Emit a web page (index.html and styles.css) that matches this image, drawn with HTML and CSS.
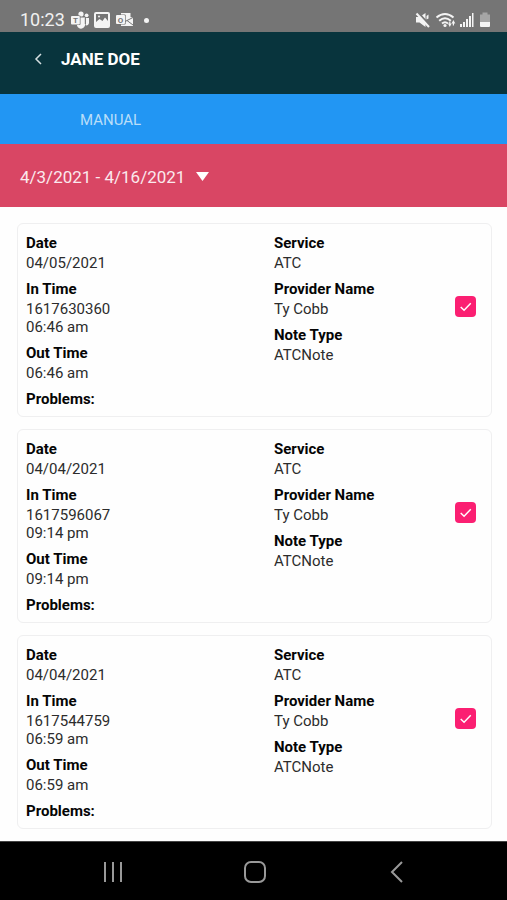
FILE: index.html
```html
<!DOCTYPE html>
<html lang="en">
<head>
<meta charset="utf-8">
<meta name="viewport" content="width=device-width, initial-scale=1">
<title>Jane Doe</title>
<link rel="stylesheet" href="styles.css">
</head>
<body>
<div class="status">
  <span class="clock">10:23</span>
  <svg class="teams" width="19" height="18" viewBox="0 0 19 18" aria-hidden="true">
    <circle cx="10" cy="3" r="2.600"/><circle cx="15.600" cy="4.300" r="1.900"/>
    <path d="M6 6.500h8v6a4 4 0 0 1-8 2zM14.700 7H18v5a2.600 2.600 0 0 1-3.300 2.300z"/>
    <path class="gap" d="M14.300 7v6"/>
    <rect class="cut" x="0" y="4.500" width="9.500" height="9.500" rx="1"/>
    <rect x="0" y="5" width="8.800" height="8.500" rx="1"/>
    <text x="4.500" y="12" text-anchor="middle">T</text>
  </svg>
  <svg class="photo" width="16" height="16" viewBox="0 0 16 16" aria-hidden="true">
    <rect x="1" y="1" width="14" height="14" rx="1" fill="none" stroke="#f4f4f4" stroke-width="2"/>
    <path d="M2 10l3.500-3 3 2 2.500-3.500 3 3.500v5H2z"/><circle cx="5" cy="4.500" r="1"/>
  </svg>
  <svg class="mail" width="18" height="16" viewBox="0 0 18 16" aria-hidden="true">
    <path d="M5 1h9.500v4L17 5.500V14H5z"/>
    <path class="gap" d="M9 9.500l8-4M11 8.500l6 4.500"/>
    <rect class="cut" x="0" y="2.500" width="9.700" height="10" rx="1"/>
    <rect x="0" y="3" width="9" height="9" rx="1"/>
    <text x="4.500" y="10.500" text-anchor="middle">O</text>
  </svg>
  <span class="dot"></span>
  <svg class="signals" width="76" height="18" viewBox="0 0 76 18" aria-hidden="true">
    <path d="M1 6h3.500L10.500 2v14l-6-4.500H1z"/>
    <path d="M11.500 5l2-1.500v4l-2 1z"/>
    <path class="line" d="M3 1.500l12 13"/>
    <path class="slash" d="M1.500 2.500l12.500 13.500"/>
    <path class="wave" d="M21.500 6.500q8.500-7 17 0M24.200 9.700q5.800-4.800 11.600 0M27 12.500q3-2.500 6 0"/>
    <circle cx="30" cy="14.500" r="1.600"/>
    <path d="M33 12.500h1.200v-2h1.200v2h1.200l-1.800 3.500zM36.500 12.500l1.900-3.500 1.900 3.500h-1.300v2h-1.200v-2z"/>
    <path d="M45 13h2v3h-2zM48 11h2v5h-2zM51 8h2v8h-2zM54 5h2v11h-2zM57 2h1.500v14H57z"/>
    <path fill="#a6a6a6" d="M65 3.500h2.500V1.500h5v2H75V11H65z"/>
    <path d="M65 11h10v4a1 1 0 0 1-1 1h-8a1 1 0 0 1-1-1z"/>
  </svg>
</div>
<header class="header">
  <button class="back" type="button" aria-label="Back">
    <svg width="8" height="12" viewBox="0 0 8 12"><path d="M7 1L2 6l5 5"/></svg>
  </button>
  <h1>JANE DOE</h1>
</header>
<nav class="tabs"><a href="#manual">MANUAL</a></nav>
<div class="range">
  <button type="button">4/3/2021 - 4/16/2021
    <svg width="13" height="9" viewBox="0 0 13 9" aria-hidden="true"><path d="M0 0h13L6.500 9z"/></svg>
  </button>
</div>
<main class="notes" id="manual">
  <article class="card">
    <dl><dt>Date</dt><dd>04/05/2021</dd><dt>In Time</dt><dd>1617630360<br>06:46 am</dd><dt>Out Time</dt><dd>06:46 am</dd><dt>Problems:</dt></dl>
    <dl><dt>Service</dt><dd>ATC</dd><dt>Provider Name</dt><dd>Ty Cobb</dd><dt>Note Type</dt><dd>ATCNote</dd></dl>
    <label class="check"><input type="checkbox" checked aria-label="Select note 1617630360"><svg viewBox="0 0 22 22" aria-hidden="true"><path d="M6 11.500l3.500 3.500L16.500 7.500"/></svg></label>
  </article>
  <article class="card">
    <dl><dt>Date</dt><dd>04/04/2021</dd><dt>In Time</dt><dd>1617596067<br>09:14 pm</dd><dt>Out Time</dt><dd>09:14 pm</dd><dt>Problems:</dt></dl>
    <dl><dt>Service</dt><dd>ATC</dd><dt>Provider Name</dt><dd>Ty Cobb</dd><dt>Note Type</dt><dd>ATCNote</dd></dl>
    <label class="check"><input type="checkbox" checked aria-label="Select note 1617596067"><svg viewBox="0 0 22 22" aria-hidden="true"><path d="M6 11.500l3.500 3.500L16.500 7.500"/></svg></label>
  </article>
  <article class="card">
    <dl><dt>Date</dt><dd>04/04/2021</dd><dt>In Time</dt><dd>1617544759<br>06:59 am</dd><dt>Out Time</dt><dd>06:59 am</dd><dt>Problems:</dt></dl>
    <dl><dt>Service</dt><dd>ATC</dd><dt>Provider Name</dt><dd>Ty Cobb</dd><dt>Note Type</dt><dd>ATCNote</dd></dl>
    <label class="check"><input type="checkbox" checked aria-label="Select note 1617544759"><svg viewBox="0 0 22 22" aria-hidden="true"><path d="M6 11.500l3.500 3.500L16.500 7.500"/></svg></label>
  </article>
</main>
<footer class="system">
  <button type="button" aria-label="Recent apps"><svg width="24" height="24" viewBox="0 0 24 24"><path d="M4 2v20M12 2v20M20 2v20"/></svg></button>
  <button type="button" aria-label="Home"><svg width="24" height="24" viewBox="0 0 24 24"><rect x="2" y="2" width="20" height="20" rx="6"/></svg></button>
  <button type="button" aria-label="System back"><svg width="24" height="24" viewBox="0 0 24 24"><path d="M17 2L7 12l10 10"/></svg></button>
</footer>
</body>
</html>
```
FILE: styles.css
```css
* {
  box-sizing: border-box;
}

body {
  display: flex;
  flex-direction: column;
  min-height: 100vh;
  margin: 0;
  background: #fefefe;
  color: #2c2c2c;
  font: 15px/18px Roboto, sans-serif;
}

button {
  padding: 0;
  border: 0;
  background: none;
  color: inherit;
  font: inherit;
}

svg {
  flex: none;
}

.status {
  display: flex;
  align-items: center;
  height: 32px;
  padding: 8px 16px 0 20px;
  background: #757575;
  color: #f0f0f0;
  font-size: 18px;
}

.status svg {
  fill: #f4f4f4;
}

.status text {
  fill: #757575;
  font: bold 8px Roboto, sans-serif;
}

.status .cut {
  fill: #757575;
}

.status .line,
.status .gap {
  fill: none;
  stroke: #757575;
  stroke-width: 2;
}

.status .gap {
  stroke-width: 1;
}

.status .slash,
.status .wave {
  fill: none;
  stroke: #f4f4f4;
  stroke-width: 2;
}

.teams {
  margin-left: 6px;
}

.photo {
  margin-left: 4px;
}

.mail {
  margin-left: 6px;
}

.dot {
  width: 5px;
  height: 5px;
  margin-left: 10px;
  border-radius: 50%;
  background: #f4f4f4;
}

.signals {
  margin-left: auto;
}

.header {
  display: flex;
  align-items: center;
  gap: 19px;
  height: 62px;
  padding: 0 34px 8px;
  background: #08343d;
}

.header h1 {
  margin: 0;
  color: #fff;
  font-size: 17px;
  font-weight: 700;
}

.back {
  display: flex;
}

.back path {
  fill: none;
  stroke: #d5dfe1;
  stroke-width: 1.5;
}

.tabs {
  display: flex;
  align-items: center;
  height: 50px;
  padding: 2px 80px 0;
  background: #2296f3;
}

.tabs a {
  color: #b9def9;
  text-decoration: none;
}

.range {
  display: flex;
  align-items: center;
  height: 63px;
  padding: 2px 20px 0;
  background: #d94664;
  color: #fbe9ed;
  font-size: 17px;
}

.range button {
  display: flex;
  align-items: center;
  gap: 11px;
}

.range path {
  fill: #fff;
}

.notes {
  display: flex;
  flex: 1;
  flex-direction: column;
  gap: 12px;
  padding: 16px 15px 12px 17px;
}

.card {
  display: grid;
  grid-template-columns: 137fr 100fr 28px;
  align-items: start;
  padding: 10px 8px 8px;
  border: 1px solid #efeff0;
  border-radius: 6px;
  background: #fefefe;
}

dl,
dd {
  margin: 0;
}

dt {
  color: #050505;
  font-weight: 700;
}

dd {
  margin: 2px 0 8px;
}

.check {
  display: grid;
  width: 21px;
  height: 21px;
  margin-top: 62px;
}

.check input,
.check svg {
  grid-area: 1 / 1;
  width: 21px;
  height: 21px;
  margin: 0;
}

.check input {
  appearance: none;
  border-radius: 4px;
  background: #fb1f72;
}

.check svg {
  pointer-events: none;
}

.check path {
  fill: none;
  stroke: #fff;
  stroke-width: 1.5;
}

.system {
  display: grid;
  grid-template-columns: repeat(3, 142px);
  justify-content: center;
  align-items: center;
  height: 59px;
  padding: 2px 0 0 2px;
  border-top: 1px solid #444;
  background: #000;
}

.system button {
  display: flex;
  justify-content: center;
}

.system path,
.system rect {
  fill: none;
  stroke: #999;
  stroke-width: 2;
}
```
